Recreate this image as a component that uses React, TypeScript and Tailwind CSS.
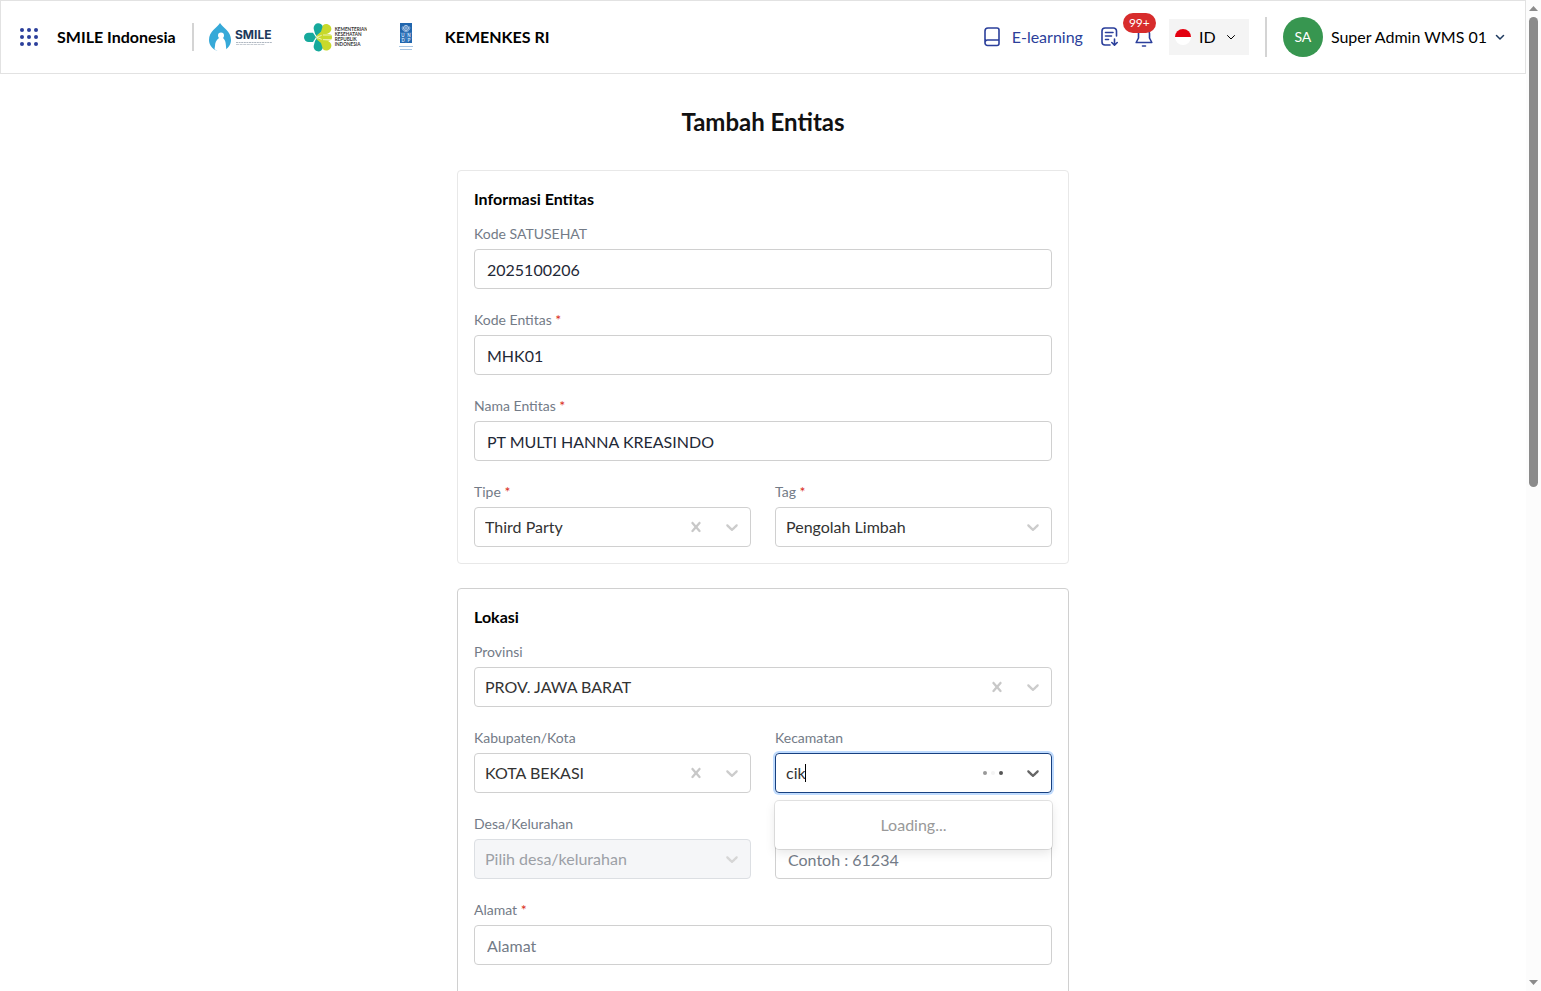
import React from 'react'
import clsx from 'clsx'

const CHEVRON_PATH =
  'M4.516 7.548c0.436-0.446 1.043-0.481 1.576 0l3.908 3.747 3.908-3.747c0.533-0.481 1.141-0.446 1.574 0 0.436 0.445 0.408 1.197 0 1.615-0.406 0.418-4.695 4.502-4.695 4.502-0.217 0.223-0.502 0.335-0.787 0.335s-0.57-0.112-0.789-0.335c0 0-4.287-4.084-4.695-4.502s-0.436-1.17 0-1.615z'

const CROSS_PATH =
  'M14.348 14.849c-0.469 0.469-1.229 0.469-1.697 0l-2.651-3.030-2.651 3.029c-0.469 0.469-1.229 0.469-1.697 0-0.469-0.469-0.469-1.229 0-1.697l2.758-3.15-2.759-3.152c-0.469-0.469-0.469-1.228 0-1.697s1.228-0.469 1.697 0l2.652 3.031 2.651-3.031c0.469-0.469 1.228-0.469 1.697 0s0.469 1.229 0 1.697l-2.758 3.152 2.758 3.15c0.469 0.469 0.469 1.229 0 1.698z'

function GridIcon() {
  return (
    <svg width="18" height="18" viewBox="0 0 18 18" fill="#2b3f9b">
      {[2, 9, 16].map((y) => [2, 9, 16].map((x) => <circle key={`${x}-${y}`} cx={x} cy={y} r="2" />))}
    </svg>
  )
}

function SmileLogo() {
  return (
    <svg width="64" height="30" viewBox="0 0 64 30" role="img" aria-label="SMILE">
      <path d="M12 1C15 6 23 9 23 18a11 11 0 0 1-22 0C1 9 9 6 12 1z" fill="#36a9d8" />
      <circle cx="13" cy="13.500" r="3" fill="#fff" />
      <path d="M11 16c-3 2-4 5-4 8l-.5 3c3 3 8 4 12 1-1-5 0-9-3.500-12z" fill="#fff" />
      <text x="27" y="17" fontFamily="Inter, sans-serif" fontSize="12" fontWeight="700" fill="#1d3b5c">
        SMILE
      </text>
      <path d="M28 20.500h36" stroke="#9aa5b1" strokeDasharray="2 .6" strokeWidth=".8" />
      <path d="M28 22.500h29" stroke="#b6bec7" strokeDasharray="3 .6" strokeWidth=".8" />
    </svg>
  )
}

function KemenkesLogo() {
  return (
    <svg width="63" height="30" viewBox="0 0 189 90" role="img" aria-label="Kementerian Kesehatan Republik Indonesia">
      <g fill="#16a99c">
        <path d="M33 35L29 20a14 14 0 0 1 28-4c1 8-3 13-9 18L38 43z" />
        <path d="M33 57l-4 15a14 14 0 0 0 28 4c1-8-3-13-9-18L38 49z" />
        <path d="M36 46L27 60H14a14 14 0 0 1 0-28h13z" />
      </g>
      <g fill="#c8d92b">
        <path d="M36 42l15-13 6-19c10-9 26 0 25 12-1 10-9 13-18 15z" />
        <path d="M36 50l15 13 6 19c10 9 26 0 25-12-1-10-9-13-18-15z" />
        <path d="M35 46l13-10h26a10 10 0 0 1 0 20H48z" />
      </g>
      <path d="M53 40l-15 6 15 6M57 39h25M57 53h25" stroke="#fff" strokeWidth="2" fill="none" />
      <g fontFamily="Lato, sans-serif" fontSize="14" fontWeight="700" fill="#333">
        <text x="92" y="28">KEMENTERIAN</text>
        <text x="92" y="43">KESEHATAN</text>
        <text x="92" y="58">REPUBLIK</text>
        <text x="92" y="73">INDONESIA</text>
      </g>
    </svg>
  )
}

function UndpLogo() {
  return (
    <svg width="14" height="30" viewBox="0 0 14 30" role="img" aria-label="UNDP">
      <path d="M1 1h12v20H1z" fill="#2166ae" />
      <circle cx="7" cy="6" r="2.500" fill="none" stroke="#fff" strokeWidth=".7" />
      <path d="M7 3.500v5M4.500 6h5M3.500 4.500c-1 3 1 5 3.500 5s4.500-2 3.500-5" fill="none" stroke="#dbeafe" strokeWidth=".6" />
      <path d="M1 11h12M1 16h12M7 11v10" stroke="#6d9fd0" strokeWidth=".5" />
      <g fontFamily="Inter, sans-serif" fontSize="4.500" fontWeight="600" fill="#dbeafe" textAnchor="middle">
        <text x="4" y="15.200">U</text>
        <text x="10" y="15.200">N</text>
        <text x="4" y="20.200">D</text>
        <text x="10" y="20.200">P</text>
      </g>
      <path d="M0 24.500h14M1 27.500h12" stroke="#a9c6e3" />
    </svg>
  )
}

function BookIcon() {
  return (
    <svg width="16" height="20" viewBox="0 0 16 20" fill="none" stroke="#2b3f9b" strokeWidth="1.600" strokeLinejoin="round">
      <path d="M1 16V4a3 3 0 0 1 3-3h9a2 2 0 0 1 2 2v10H3.500A2.500 2.500 0 0 0 1 15.500v.5a2.500 2.500 0 0 0 2.500 2.500H13a2 2 0 0 0 2-2V13" />
    </svg>
  )
}

function DocDownIcon() {
  return (
    <svg width="18" height="20" viewBox="0 0 18 20" fill="none" stroke="#2b3f9b" strokeWidth="1.600" strokeLinecap="round" strokeLinejoin="round">
      <path d="M15.500 9V4a3 3 0 0 0-3-3H4a3 3 0 0 0-3 3v11a3 3 0 0 0 3 3h5" />
      <path d="M4.500 5.500h7.500M4.500 9h6M4.500 12.500h3M13.500 12v6M10.800 15.500l2.700 2.700 2.700-2.700" />
    </svg>
  )
}

function BellIcon() {
  return (
    <svg width="18" height="20" viewBox="0 0 18 20" fill="none" stroke="#2b3f9b" strokeWidth="1.600" strokeLinecap="round" strokeLinejoin="round">
      <path d="M9 1a5.500 5.500 0 0 0-5.500 5.500V11L1.200 15.500h15.600L14.500 11V6.500A5.500 5.500 0 0 0 9 1zM7.500 19h3" />
    </svg>
  )
}

function FlagIcon() {
  return (
    <svg width="16" height="16" viewBox="0 0 16 16">
      <circle cx="8" cy="8" r="8" fill="#fff" />
      <path d="M0 8a8 8 0 0 1 16 0z" fill="#e3000f" />
    </svg>
  )
}

function SmallChevron({ className }: { className: string }) {
  return (
    <svg width="10" height="6" viewBox="0 0 10 6" fill="none" stroke="currentColor" strokeLinecap="round" strokeLinejoin="round" className={className}>
      <path d="M1.500 1.500L5 5l3.500-3.500" />
    </svg>
  )
}

function Header() {
  return (
    <header className="flex h-[74px] shrink-0 items-center justify-between border border-[#e2e2e2] pr-5 pl-[19px] text-black">
      <div className="flex items-center">
        <button type="button" aria-label="Menu">
          <GridIcon />
        </button>
        <span className="ml-[19px] font-bold">SMILE Indonesia</span>
        <div className="ml-4 h-7 w-0.5 bg-[#d4d4d4]" />
        <div className="ml-3.5 flex items-center gap-8">
          <SmileLogo />
          <KemenkesLogo />
          <UndpLogo />
          <span className="font-bold">KEMENKES RI</span>
        </div>
      </div>

      <div className="flex items-center">
        <a href="#e-learning" className="flex items-center gap-3 text-[#2b3f9b]">
          <BookIcon />
          E-learning
        </a>
        <button type="button" aria-label="Unduhan" className="ml-[18px]">
          <DocDownIcon />
        </button>
        <button type="button" aria-label="Notifikasi" className="relative ml-4">
          <BellIcon />
          <span className="absolute -top-3.5 -left-3 rounded-full bg-[#d72c2c] px-1.5 text-xs leading-5 text-white">99+</span>
        </button>
        <button type="button" className="ml-4 flex h-9 w-20 items-center bg-[#f4f4f4] px-1.5">
          <FlagIcon />
          <span className="ml-2">ID</span>
          <SmallChevron className="ml-2.5" />
        </button>
        <div className="ml-4 h-10 w-0.5 bg-[#d4d4d4]" />
        <button type="button" className="ml-4 flex items-center gap-2">
          <span className="flex size-10 items-center justify-center rounded-full bg-[#379650] text-sm text-white">SA</span>
          Super Admin WMS 01
          <SmallChevron className="stroke-[1.5] text-[#1e3a5f]" />
        </button>
      </div>
    </header>
  )
}

function Field({ id, label, required, children }: { id: string; label: string; required?: boolean; children: React.ReactNode }) {
  return (
    <div className="flex min-w-0 flex-1 flex-col gap-[5px]">
      <label htmlFor={id} className="text-sm leading-5 text-[#737b87]">
        {label} {required && <span className="text-[#d92d20]">*</span>}
      </label>
      {children}
    </div>
  )
}

function TextInput({ id, value, placeholder }: { id: string; value?: string; placeholder?: string }) {
  return (
    <input
      id={id}
      type="text"
      defaultValue={value}
      placeholder={placeholder}
      className="h-10 w-full rounded border border-[#d0d0d0] px-3 text-[#1f2937] placeholder:text-[#737b87]"
    />
  )
}

function Chevron({ className }: { className: string }) {
  return (
    <svg width="36" height="20" viewBox="-8 0 36 20" fill="currentColor" className={clsx('pointer-events-none shrink-0', className)}>
      <path d={CHEVRON_PATH} />
    </svg>
  )
}

function SelectBox({ id, value, clearable, disabled }: { id: string; value: string; clearable?: boolean; disabled?: boolean }) {
  return (
    <div className={clsx('flex h-10 items-center rounded border', disabled ? 'border-[#dcdfe3] bg-[#f5f6f8]' : 'border-[#d0d0d0]')}>
      <select
        id={id}
        disabled={disabled}
        className={clsx('h-full min-w-0 flex-1 appearance-none pl-2.5 opacity-100', disabled ? 'text-[#9ca0a6]' : 'text-[#333]')}
      >
        <option>{value}</option>
      </select>
      {clearable && (
        <button type="button" aria-label="Hapus" className="px-2 text-[#c8c8c8]">
          <svg width="20" height="20" viewBox="0 0 20 20" fill="currentColor">
            <path d={CROSS_PATH} />
          </svg>
        </button>
      )}
      <Chevron className={disabled ? 'text-[#d6d6d6]' : 'text-[#cccccc]'} />
    </div>
  )
}

function DistrictSearch({ id }: { id: string }) {
  return (
    <div className="relative">
      <div className="flex h-10 items-center rounded border border-[#174080] pl-2.5 ring-2 ring-[#bfdbfe]">
        <input id={id} type="text" role="combobox" aria-expanded="true" defaultValue="cik" className="field-sizing-content text-[#333] outline-none" />
        <span className="-ml-px h-[18px] w-px bg-black" />
        <div className="mr-3 ml-auto flex gap-1">
          <span className="size-1 rounded-full bg-[#999]" />
          <span className="size-1 rounded-full bg-[#f4f4f4]" />
          <span className="size-1 rounded-full bg-[#555]" />
        </div>
        <Chevron className="text-[#666]" />
      </div>
      <div className="absolute top-12 right-0 left-0 z-10 rounded bg-white px-3 py-3 text-center text-[#999] shadow-[0_0_0_1px_rgba(0,0,0,0.1),0_4px_11px_rgba(0,0,0,0.1)]">
        Loading...
      </div>
    </div>
  )
}

function Section({ title, className, children }: { title: string; className: string; children: React.ReactNode }) {
  return (
    <section className={clsx('rounded border px-4 pt-4', className)}>
      <h2 className="mb-[13px] font-bold text-black">{title}</h2>
      <div className="flex flex-col gap-[21px]">{children}</div>
    </section>
  )
}

function Scrollbar() {
  return (
    <div aria-hidden="true" className="flex w-[15px] shrink-0 flex-col items-center bg-[#fcfcfc] py-1.5">
      <svg width="9" height="5" viewBox="0 0 9 5" fill="#8b8b8b">
        <path d="M4.500 0L9 5H0z" />
      </svg>
      <div className="mt-1.5 h-[48%] w-[9px] rounded-full bg-[#8b8b8b]" />
      <svg width="9" height="5" viewBox="0 0 9 5" fill="#8b8b8b" className="mt-auto">
        <path d="M4.500 5L0 0h9z" />
      </svg>
    </div>
  )
}

export default function App() {
  return (
    <div className="flex h-screen bg-white font-[Lato,sans-serif] text-base">
      <div className="flex min-w-0 flex-1 flex-col overflow-hidden">
        <Header />
        <main className="mx-auto w-full max-w-[612px] pt-8">
          <h1 className="mb-8 text-center text-2xl font-bold text-[#111]">Tambah Entitas</h1>
          <form className="flex flex-col gap-6">
            <Section title="Informasi Entitas" className="border-[#e8e8e8] pb-4">
              <Field id="satusehat" label="Kode SATUSEHAT">
                <TextInput id="satusehat" value="2025100206" />
              </Field>
              <Field id="kode" label="Kode Entitas" required>
                <TextInput id="kode" value="MHK01" />
              </Field>
              <Field id="nama" label="Nama Entitas" required>
                <TextInput id="nama" value="PT MULTI HANNA KREASINDO" />
              </Field>
              <div className="flex gap-6">
                <Field id="tipe" label="Tipe" required>
                  <SelectBox id="tipe" value="Third Party" clearable />
                </Field>
                <Field id="tag" label="Tag" required>
                  <SelectBox id="tag" value="Pengolah Limbah" />
                </Field>
              </div>
            </Section>

            <Section title="Lokasi" className="border-[#d0d0d0] pb-24">
              <Field id="provinsi" label="Provinsi">
                <SelectBox id="provinsi" value="PROV. JAWA BARAT" clearable />
              </Field>
              <div className="flex gap-6">
                <Field id="kabupaten" label="Kabupaten/Kota">
                  <SelectBox id="kabupaten" value="KOTA BEKASI" clearable />
                </Field>
                <Field id="kecamatan" label="Kecamatan">
                  <DistrictSearch id="kecamatan" />
                </Field>
              </div>
              <div className="flex gap-6">
                <Field id="desa" label="Desa/Kelurahan">
                  <SelectBox id="desa" value="Pilih desa/kelurahan" disabled />
                </Field>
                <Field id="kodepos" label="Kode Pos">
                  <TextInput id="kodepos" placeholder="Contoh : 61234" />
                </Field>
              </div>
              <Field id="alamat" label="Alamat" required>
                <TextInput id="alamat" placeholder="Alamat" />
              </Field>
            </Section>
          </form>
        </main>
      </div>
      <Scrollbar />
    </div>
  )
}
